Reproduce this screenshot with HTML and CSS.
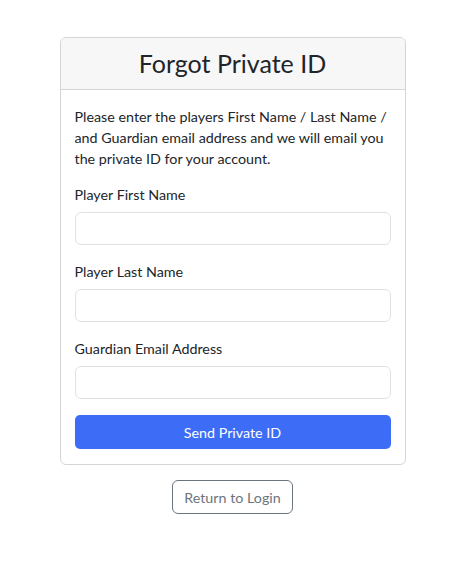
FILE: index.html
```html
<!DOCTYPE html>
<html lang="en">
<head>
<meta charset="utf-8">
<title>Forgot Private ID</title>
<link rel="stylesheet" href="styles.css">
</head>
<body>
<main class="page">
  <section class="card">
    <header class="card-header">
      <h1 class="card-title">Forgot Private ID</h1>
    </header>
    <form class="card-body">
      <p class="intro">Please enter the players First Name / Last Name / and Guardian email address and we will email you the private ID for your account.</p>
      <div class="group">
        <label class="label" for="first">Player First Name</label>
        <input class="input" id="first" type="text">
      </div>
      <div class="group">
        <label class="label" for="last">Player Last Name</label>
        <input class="input" id="last" type="text">
      </div>
      <div class="group group-last">
        <label class="label" for="email">Guardian Email Address</label>
        <input class="input" id="email" type="email">
      </div>
      <button class="btn-primary" type="button">Send Private ID</button>
    </form>
  </section>
  <div class="back">
    <button class="btn-outline" type="button">Return to Login</button>
  </div>
</main>
</body>
</html>
```
FILE: styles.css
```css
* { box-sizing: border-box; }

body {
  margin: 0;
  background: #ffffff;
  color: #212529;
  font-family: "Lato", "Open Sans", "Noto Sans", sans-serif;
  font-size: 14.3px;
  line-height: 21px;
}

.page {
  padding-top: 37px;
}

.card {
  width: 346px;
  margin: 0 auto;
  border: 1px solid #d5d5d5;
  border-radius: 6px;
  overflow: hidden;
}

.card-header {
  background: #f7f7f7;
  border-bottom: 1px solid #d5d5d5;
  padding: 10px;
  text-align: center;
}

.card-title {
  margin: 0;
  font-size: 25px;
  font-weight: 400;
  line-height: 31px;
}

.card-body {
  padding: 16px 14px 15px;
}

.intro {
  margin: 0 0 15px;
}

.group {
  margin-bottom: 16px;
}

.label {
  display: block;
  margin-bottom: 7px;
}

.input {
  display: block;
  width: 100%;
  height: 33px;
  border: 1px solid #dee2e6;
  border-radius: 6px;
  background: #fff;
  font: inherit;
  padding: 0 12px;
}

.btn-primary {
  display: block;
  width: 100%;
  height: 34px;
  border: 0;
  border-radius: 5px;
  background: #3d6df7;
  color: #fff;
  font: inherit;
}

.back {
  display: flex;
  justify-content: center;
  margin-top: 15px;
}

.btn-outline {
  height: 34px;
  width: 121px;
  padding: 0;
  border: 1px solid #6c757d;
  border-radius: 6px;
  background: #fff;
  color: #6c757d;
  font: inherit;
}
```
